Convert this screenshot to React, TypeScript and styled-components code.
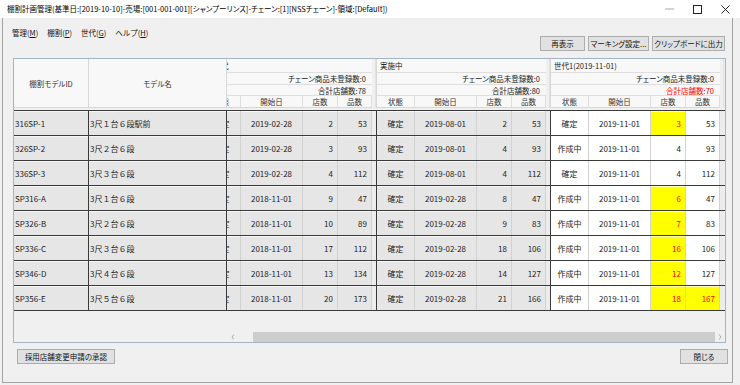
import React from 'react';
import styled, { createGlobalStyle } from 'styled-components';

const Global = createGlobalStyle`
  html, body { margin: 0; padding: 0; background: #f0f0f0; }
  body { font-family: "Noto Sans CJK JP", "Noto Sans", sans-serif; }
  * { box-sizing: border-box; }
`;

type GroupData = { s: string; d: string; n: string; q: string; hn?: boolean; hq?: boolean };
type RowData = { id: string; name: string; g: GroupData[] };

const groups = [
  { label: '前世代', unreg: 0, total: 78, red: false, current: false },
  { label: '実施中', unreg: 0, total: 80, red: false, current: false },
  { label: '世代1(2019-11-01)', unreg: 0, total: 70, red: true, current: true },
];

const rows: RowData[] = [
  { id: '316SP-1', name: '3尺１台６段駅前', g: [
    { s: '確定', d: '2019-02-28', n: '2', q: '53' },
    { s: '確定', d: '2019-08-01', n: '2', q: '53' },
    { s: '確定', d: '2019-11-01', n: '3', q: '53', hn: true } ] },
  { id: '326SP-2', name: '3尺２台６段', g: [
    { s: '確定', d: '2019-02-28', n: '3', q: '93' },
    { s: '確定', d: '2019-08-01', n: '4', q: '93' },
    { s: '作成中', d: '2019-11-01', n: '4', q: '93' } ] },
  { id: '336SP-3', name: '3尺３台６段', g: [
    { s: '確定', d: '2019-02-28', n: '4', q: '112' },
    { s: '確定', d: '2019-08-01', n: '4', q: '112' },
    { s: '確定', d: '2019-11-01', n: '4', q: '112' } ] },
  { id: 'SP316-A', name: '3尺１台６段', g: [
    { s: '確定', d: '2018-11-01', n: '9', q: '47' },
    { s: '確定', d: '2019-02-28', n: '8', q: '47' },
    { s: '作成中', d: '2019-11-01', n: '6', q: '47', hn: true } ] },
  { id: 'SP326-B', name: '3尺２台６段', g: [
    { s: '確定', d: '2018-11-01', n: '10', q: '89' },
    { s: '確定', d: '2019-02-28', n: '9', q: '83' },
    { s: '作成中', d: '2019-11-01', n: '7', q: '83', hn: true } ] },
  { id: 'SP336-C', name: '3尺３台６段', g: [
    { s: '確定', d: '2018-11-01', n: '17', q: '112' },
    { s: '確定', d: '2019-02-28', n: '18', q: '106' },
    { s: '作成中', d: '2019-11-01', n: '16', q: '106', hn: true } ] },
  { id: 'SP346-D', name: '3尺４台６段', g: [
    { s: '確定', d: '2018-11-01', n: '13', q: '134' },
    { s: '確定', d: '2019-02-28', n: '14', q: '127' },
    { s: '作成中', d: '2019-11-01', n: '12', q: '127', hn: true } ] },
  { id: 'SP356-E', name: '3尺５台６段', g: [
    { s: '確定', d: '2018-11-01', n: '20', q: '173' },
    { s: '確定', d: '2019-02-28', n: '21', q: '166' },
    { s: '作成中', d: '2019-11-01', n: '18', q: '167', hn: true, hq: true } ] },
];

const COLS = [
  { key: 's', title: '状態', w: 38, align: 'c' },
  { key: 'd', title: '開始日', w: 62, align: 'c' },
  { key: 'n', title: '店数', w: 35, align: 'r' },
  { key: 'q', title: '品数', w: 34, align: 'r' },
] as const;

const DARK = '#3a3a3a';
const LIGHT = '#d2d2d2';

const Window = styled.div`
  width: 740px;
  height: 385px;
  display: flex;
  flex-direction: column;
  background: #f0f0f0;
  overflow: hidden;
`;

const TitleBar = styled.div`
  height: 18px;
  flex: none;
  background: #fff;
  display: flex;
  align-items: center;
  padding-left: 7px;
  font-size: 7.5px;
  font-feature-settings: "palt";
  color: #000;
`;

const TitleText = styled.div`
  flex: 1;
  white-space: nowrap;
  line-height: 18px;
`;

const WinControls = styled.div`
  display: flex;
  height: 100%;
  margin-right: 1px;
`;

const WinBtn = styled.div`
  width: 28px;
  height: 100%;
  display: flex;
  align-items: center;
  justify-content: center;
`;

const Client = styled.div`
  flex: 1;
  display: flex;
  flex-direction: column;
  margin: 0 7px 2px 2px;
  border: 1px solid #a3a3a3;
  border-top: none;
  padding: 0 5px 0 10px;
`;

const MenuBar = styled.div`
  height: 19px;
  padding-top: 10px;
  margin-left: -1px;
  display: flex;
  gap: 9px;
  font-size: 7.5px;
  line-height: 9px;
  color: #111;
`;

const MenuItem = styled.span`
  white-space: nowrap;
  & u { text-decoration: underline; }
`;

const ToolBar = styled.div`
  height: 15px;
  margin-top: -1px;
  display: flex;
  justify-content: flex-end;
  gap: 3px;
  margin-right: 2px;
`;

const Button = styled.button<{ $w: number }>`
  width: ${(p) => p.$w}px;
  height: 15px;
  padding: 0;
  margin: 0;
  background: #e1e1e1;
  border: 1px solid #adadad;
  font-family: "Noto Sans CJK JP", sans-serif;
  font-size: 7.5px;
  font-feature-settings: "palt";
  line-height: 13px;
  color: #111;
  white-space: nowrap;
`;

const Grid = styled.div`
  margin-top: 7px;
  width: 713px;
  height: 285px;
  border: 1px solid #a5b4c4;
  background: #f0f0f0;
  display: flex;
  flex-direction: column;
  font-size: 7.5px;
`;

const Head = styled.div`
  height: 51px;
  flex: none;
  display: flex;
  align-items: flex-start;
  font-feature-settings: "palt";
`;

const FrozenHead = styled.div<{ $w: number }>`
  width: ${(p) => p.$w}px;
  height: 49px;
  flex: none;
  background: #f8f8f8;
  border-right: 1px solid #d8d8d8;
  border-bottom: 1px solid #d8d8d8;
  display: flex;
  align-items: center;
  justify-content: center;
  color: #333;
  white-space: nowrap;
`;

const Clip = styled.div`
  width: 498px;
  flex: none;
  overflow: hidden;
  display: flex;
  height: 100%;
`;

const Track = styled.div`
  display: flex;
  flex: none;
  margin-left: -25px;
  height: 100%;
`;

const GroupHead = styled.div`
  width: 174px;
  flex: none;
  display: flex;
  height: 49px;
`;

const GroupHeadMain = styled.div`
  width: 170px;
  border-left: 1px solid #d8d8d8;
  display: flex;
  flex-direction: column;
  background: #f8f8f8;
`;

const HeadGap = styled.div`
  width: 4px;
  background: #f0f0f0;
  border-right: 1px solid #e2e2e2;
`;

const LabelRow = styled.div`
  height: 14px;
  border-bottom: 1px solid #dedede;
  padding-left: 3px;
  display: flex;
  align-items: center;
  color: #222;
  white-space: nowrap;
`;

const InfoRow = styled.div<{ $h: number; $red?: boolean }>`
  height: ${(p) => p.$h}px;
  border-bottom: 1px solid #dedede;
  padding-right: 6px;
  display: flex;
  align-items: center;
  justify-content: flex-end;
  color: ${(p) => (p.$red ? '#ff0000' : '#222')};
  white-space: nowrap;
`;

const ColHeadRow = styled.div`
  height: 12px;
  display: flex;
  border-bottom: 1px solid #d8d8d8;
`;

const ColHead = styled.div<{ $w: number }>`
  width: ${(p) => p.$w}px;
  flex: none;
  border-right: 1px solid #dedede;
  display: flex;
  align-items: center;
  justify-content: center;
  color: #333;
  white-space: nowrap;
  overflow: hidden;
`;

const Body = styled.div`
  flex: none;
  border-top: 1px solid ${DARK};
  font-size: 8px;
`;

const Row = styled.div`
  display: flex;
  height: 25px;
  border-bottom: 1px solid ${DARK};
`;

const FrozenCell = styled.div<{ $w: number }>`
  width: ${(p) => p.$w}px;
  flex: none;
  height: 100%;
  background: #e6e6e6;
  border-right: 1px solid ${DARK};
  box-shadow: inset 0 1px 0 #f7f7f7;
  display: flex;
  align-items: center;
  padding-left: 1px;
  color: #1c1c1c;
  white-space: nowrap;
  overflow: hidden;
`;

const GroupCells = styled.div`
  display: flex;
  flex: none;
  height: 100%;
  border-left: 1px solid ${DARK};
`;

const Cell = styled.div<{ $w: number; $align: string; $bg: string; $red?: boolean }>`
  width: ${(p) => p.$w}px;
  flex: none;
  height: 100%;
  display: flex;
  align-items: center;
  justify-content: ${(p) => (p.$align === 'r' ? 'flex-end' : 'center')};
  padding-right: ${(p) => (p.$align === 'r' ? 4 : 0)}px;
  background: ${(p) => p.$bg};
  color: ${(p) => (p.$red ? '#ff0000' : '#1c1c1c')};
  border-right: 1px solid ${LIGHT};
  box-shadow: inset 0 1px 0 rgba(255, 255, 255, 0.7);
  white-space: nowrap;
  overflow: hidden;
`;

const CellGap = styled.div`
  width: 4px;
  flex: none;
  height: 100%;
  background: #ececec;
`;

const Empty = styled.div`
  flex: 1;
`;

const ScrollRow = styled.div`
  height: 10px;
  flex: none;
  display: flex;
`;

const ScrollBlank = styled.div`
  width: 213px;
  flex: none;
`;

const ScrollBar = styled.div`
  width: 498px;
  flex: none;
  display: flex;
  background: #f0f0f0;
`;

const ScrollArrow = styled.div<{ $w: number }>`
  width: ${(p) => p.$w}px;
  flex: none;
  display: flex;
  align-items: center;
  justify-content: center;
`;

const ScrollSpace = styled.div`
  width: 14px;
  flex: none;
`;

const Thumb = styled.div`
  width: 462px;
  flex: none;
  background: #cdcdcd;
`;

const BottomBar = styled.div`
  margin-top: 6px;
  height: 15px;
  display: flex;
  justify-content: space-between;
  padding-left: 4px;
  margin-right: -1px;
`;

const Chevron = ({ left }: { left?: boolean }) => (
  <svg width="4" height="6" viewBox="0 0 4 6">
    <path d={left ? 'M3 0.5 L1 3 L3 5.5' : 'M1 0.5 L3 3 L1 5.5'} stroke="#a6a6a6" strokeWidth="0.9" fill="none" />
  </svg>
);

export default function App() {
  return (
    <>
      <Global />
      <Window>
        <TitleBar>
          <TitleText>
            棚割計画管理(基準日:[2019-10-10]-売場:[001-001-001][シャンプーリンス]-チェーン:[1][NSSチェーン]-領域:[Default])
          </TitleText>
          <WinControls>
            <WinBtn>
              <svg width="9" height="2" viewBox="0 0 9 2"><line x1="0" y1="1" x2="9" y2="1" stroke="#a8a8a8" strokeWidth="1" /></svg>
            </WinBtn>
            <WinBtn>
              <svg width="9" height="9" viewBox="0 0 9 9"><rect x="0.5" y="0.5" width="8" height="8" stroke="#222" strokeWidth="1" fill="none" /></svg>
            </WinBtn>
            <WinBtn>
              <svg width="9" height="9" viewBox="0 0 9 9"><path d="M0.5 0.5 L8.5 8.5 M8.5 0.5 L0.5 8.5" stroke="#222" strokeWidth="1" /></svg>
            </WinBtn>
          </WinControls>
        </TitleBar>
        <Client>
          <MenuBar>
            <MenuItem>管理(<u>M</u>)</MenuItem>
            <MenuItem>棚割(<u>P</u>)</MenuItem>
            <MenuItem>世代(<u>G</u>)</MenuItem>
            <MenuItem>ヘルプ(<u>H</u>)</MenuItem>
          </MenuBar>
          <ToolBar>
            <Button $w={45}>再表示</Button>
            <Button $w={61}>マーキング設定...</Button>
            <Button $w={73}>クリップボードに出力</Button>
          </ToolBar>
          <Grid>
            <Head>
              <FrozenHead $w={75}>棚割モデルID</FrozenHead>
              <FrozenHead $w={138}>モデル名</FrozenHead>
              <Clip>
                <Track>
                  {groups.map((g, gi) => (
                    <GroupHead key={gi}>
                      <GroupHeadMain>
                        <LabelRow>{g.label}</LabelRow>
                        <InfoRow $h={12}>チェーン商品未登録数:{g.unreg}</InfoRow>
                        <InfoRow $h={11} $red={g.red}>合計店舗数:{g.total}</InfoRow>
                        <ColHeadRow>
                          {COLS.map((c) => (
                            <ColHead key={c.key} $w={c.w}>{c.title}</ColHead>
                          ))}
                        </ColHeadRow>
                      </GroupHeadMain>
                      <HeadGap />
                    </GroupHead>
                  ))}
                </Track>
              </Clip>
            </Head>
            <Body>
              {rows.map((r) => (
                <Row key={r.id}>
                  <FrozenCell $w={75}>{r.id}</FrozenCell>
                  <FrozenCell $w={138}>{r.name}</FrozenCell>
                  <Clip>
                    <Track>
                      {r.g.map((gd, gi) => {
                        const cur = groups[gi].current;
                        return (
                          <GroupCells key={gi}>
                            {COLS.map((c) => {
                              const hl = (c.key === 'n' && gd.hn) || (c.key === 'q' && gd.hq);
                              const bg = hl ? '#ffff00' : cur ? '#ffffff' : '#e6e6e6';
                              return (
                                <Cell key={c.key} $w={c.w} $align={c.align} $bg={bg} $red={hl}>
                                  {gd[c.key]}
                                </Cell>
                              );
                            })}
                            <CellGap />
                          </GroupCells>
                        );
                      })}
                    </Track>
                  </Clip>
                </Row>
              ))}
            </Body>
            <Empty />
            <ScrollRow>
              <ScrollBlank />
              <ScrollBar>
                <ScrollArrow $w={12}><Chevron left /></ScrollArrow>
                <ScrollSpace />
                <Thumb />
                <ScrollArrow $w={10}><Chevron /></ScrollArrow>
              </ScrollBar>
            </ScrollRow>
          </Grid>
          <BottomBar>
            <Button $w={98}>採用店舗変更申請の承認</Button>
            <Button $w={48}>閉じる</Button>
          </BottomBar>
        </Client>
      </Window>
    </>
  );
}
